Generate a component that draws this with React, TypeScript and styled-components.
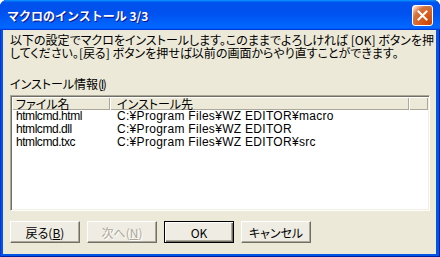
import React from "react";
import styled, { createGlobalStyle } from "styled-components";

const Global = createGlobalStyle`
  html, body { margin: 0; padding: 0; background: #ffffff; }
  body { font-family: "Liberation Sans", "Noto Sans CJK JP", sans-serif; font-size: 12px; color: #000; }
`;

const Window = styled.div`
  width: 440px;
  height: 257px;
  box-sizing: border-box;
  display: flex;
  flex-direction: column;
  background: #0055e5;
  border-radius: 7px 7px 0 0;
  overflow: hidden;
  box-shadow: inset 1px 0 #0831d9, inset -1px 0 #001ea0, inset 0 -1px #001ea0;
`;

const TitleBar = styled.div`
  height: 30px;
  flex: none;
  display: flex;
  align-items: center;
  justify-content: space-between;
  padding: 0 7px 0 7px;
  box-sizing: border-box;
  background: linear-gradient(
    180deg,
    #0997ff,
    #0053ee 8%,
    #0050ee 40%,
    #0066ff 88%,
    #0066ff 93%,
    #005bff 95%,
    #003dd7 96%,
    #003dd7
  );
`;

const Title = styled.span`
  color: #fff;
  font-weight: bold;
  font-size: 12px;
  font-family: "Noto Sans CJK JP", sans-serif;
  text-shadow: 1px 1px #0f1089;
  padding-top: 1px;
`;

const CloseButton = styled.div`
  width: 21px;
  height: 21px;
  box-sizing: border-box;
  border: 1px solid #fff;
  border-radius: 3px;
  display: flex;
  align-items: center;
  justify-content: center;
  background: radial-gradient(circle at 90% 90%, #cc4600 0%, #dc6527 55%, #cd7546 70%, #ffccb2 90%, #fff 100%);
`;

const Client = styled.div`
  flex: 1;
  margin: 0 4px 3px 3px;
  background: #ece9d8;
  display: flex;
  flex-direction: column;
  padding: 3px 6px 0 7px;
  font-family: "Noto Sans CJK JP", sans-serif;
  font-feature-settings: "palt" 1;
`;

const Message = styled.div`
  font-size: 12px;
  line-height: 13px;
  white-space: nowrap;
`;

const Label = styled.div`
  margin-top: 18px;
  font-size: 12px;
  line-height: 13px;
  white-space: nowrap;
`;

const Paren = styled.span`
  letter-spacing: -1.5px;
`;

const ListView = styled.div`
  margin-top: 5px;
  height: 116px;
  box-sizing: border-box;
  border: 1px solid;
  border-color: #aca899 #ffffff #ffffff #aca899;
  box-shadow: inset 1px 1px #716f64, inset -1px -1px #f1efe2;
  background: #fff;
  padding: 1px 1px 1px 1px;
  display: flex;
  flex-direction: column;
`;

const Header = styled.div`
  display: flex;
  height: 13px;
  flex: none;
`;

const HeaderCell = styled.div<{ $w?: number; $pad: number }>`
  ${(p) => (p.$w ? `width: ${p.$w}px; flex: none;` : `flex: 1;`)}
  box-sizing: border-box;
  background: #ece9d8;
  box-shadow: inset 1px 1px #ffffff, inset -1px -1px #aca899;
  font-size: 12px;
  line-height: 13px;
  padding-left: ${(p) => p.$pad}px;
  white-space: nowrap;
`;

const Row = styled.div`
  display: flex;
  height: 13px;
  line-height: 13px;
  font-family: "Liberation Sans", "Noto Sans CJK JP", sans-serif;
  font-size: 12px;
  white-space: nowrap;
`;

const Cell = styled.div<{ $w?: number; $pad: number; $ls: number }>`
  ${(p) => (p.$w ? `width: ${p.$w}px; flex: none;` : `flex: 1;`)}
  box-sizing: border-box;
  padding-left: ${(p) => p.$pad}px;
  letter-spacing: ${(p) => p.$ls}px;
`;

const Footer = styled.div`
  margin-top: 10px;
  display: flex;
  gap: 7px;
`;

const Button = styled.div<{ $default?: boolean; $disabled?: boolean }>`
  width: 70px;
  height: 22px;
  box-sizing: border-box;
  display: flex;
  align-items: center;
  justify-content: center;
  background: #efede3;
  font-size: 12px;
  color: ${(p) => (p.$disabled ? "#aca899" : "#000")};
  ${(p) =>
    p.$default
      ? `border: 1px solid #000;
         box-shadow: inset 1px 1px #ffffff, inset -1px -1px #716f64, inset -2px -2px #aca899;`
      : `border: 1px solid;
         border-color: #ffffff #716f64 #716f64 #ffffff;
         box-shadow: inset -1px -1px #aca899;`}
  ${(p) => (p.$disabled ? "text-shadow: 1px 1px #ffffff;" : "")}
`;

const files = [
  { name: "htmlcmd.html", dest: "C:¥Program Files¥WZ EDITOR¥macro" },
  { name: "htmlcmd.dll", dest: "C:¥Program Files¥WZ EDITOR" },
  { name: "htmlcmd.txc", dest: "C:¥Program Files¥WZ EDITOR¥src" },
];

export default function App() {
  return (
    <>
      <Global />
      <Window>
        <TitleBar>
          <Title>マクロのインストール 3/3</Title>
          <CloseButton>
            <svg width="11" height="11" viewBox="0 0 11 11">
              <path d="M1.5 1.5 L9.5 9.5 M9.5 1.5 L1.5 9.5" stroke="#fff" strokeWidth="2" strokeLinecap="square" />
            </svg>
          </CloseButton>
        </TitleBar>
        <Client>
          <Message>
            以下の設定でマクロをインストールします。このままでよろしければ [OK] ボタンを押
            <br />
            してください。[戻る] ボタンを押せば以前の画面からやり直すことができます。
          </Message>
          <Label>
            インストール情報<Paren>(<u>I</u>)</Paren>
          </Label>
          <ListView>
            <Header>
              <HeaderCell $w={98} $pad={4}>ファイル名</HeaderCell>
              <HeaderCell $w={299} $pad={7}>インストール先</HeaderCell>
              <HeaderCell $pad={0} />
            </Header>
            {files.map((f) => (
              <Row key={f.name}>
                <Cell $w={98} $pad={4} $ls={-0.45}>{f.name}</Cell>
                <Cell $pad={7} $ls={0.3}>{f.dest}</Cell>
              </Row>
            ))}
          </ListView>
          <Footer>
            <Button>
              戻る(<u>B</u>)
            </Button>
            <Button $disabled>
              次へ(<u>N</u>)
            </Button>
            <Button $default>OK</Button>
            <Button>キャンセル</Button>
          </Footer>
        </Client>
      </Window>
    </>
  );
}
